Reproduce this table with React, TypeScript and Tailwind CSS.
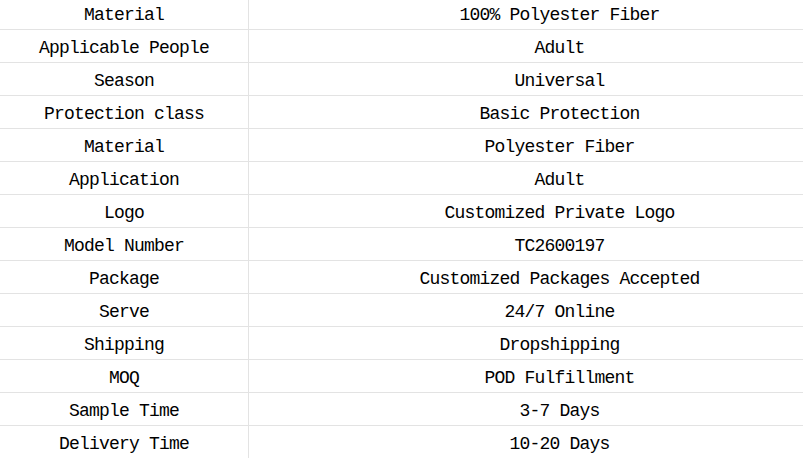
import React from "react";

const rows: [string, string][] = [
  ["Material", "100% Polyester Fiber"],
  ["Applicable People", "Adult"],
  ["Season", "Universal"],
  ["Protection class", "Basic Protection"],
  ["Material", "Polyester Fiber"],
  ["Application", "Adult"],
  ["Logo", "Customized Private Logo"],
  ["Model Number", "TC2600197"],
  ["Package", "Customized Packages Accepted"],
  ["Serve", "24/7 Online"],
  ["Shipping", "Dropshipping"],
  ["MOQ", "POD Fulfillment"],
  ["Sample Time", "3-7 Days"],
  ["Delivery Time", "10-20 Days"],
];

export default function App() {
  return (
    <div className="w-[803px] h-[458px] overflow-hidden bg-white">
      <div
        className="w-[870px] -mt-[3px] text-[18px] tracking-[-0.8px] text-black"
        style={{ fontFamily: '"Liberation Mono", "DejaVu Sans Mono", monospace' }}
      >
        {rows.map(([k, v], i) => (
          <div key={i} className="flex h-[33px] border-b border-[#e3e3e3]">
            <div className="w-[249px] shrink-0 border-r border-[#e3e3e3] flex items-center justify-center pt-[4px]">
              {k}
            </div>
            <div className="flex-1 flex items-center justify-center pt-[4px]">{v}</div>
          </div>
        ))}
      </div>
    </div>
  );
}
